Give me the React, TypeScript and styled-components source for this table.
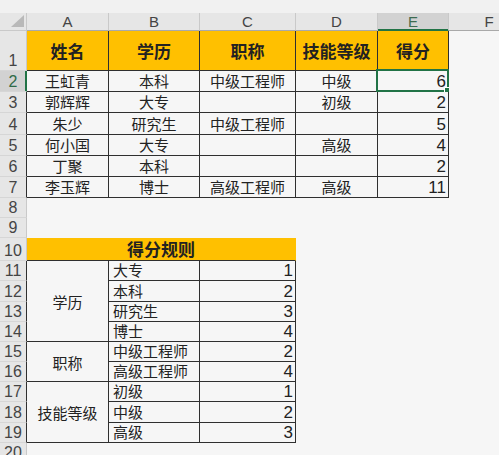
import React from 'react';
import styled, { createGlobalStyle } from 'styled-components';

const GREEN = '#217346';
const DARK = '#2f2f2f';
const YELLOW = '#ffc000';
const BG = '#f6f6f6';
const HEAD_BG = '#e6e6e6';
const HEAD_SEL = '#d2d2d2';
const HEAD_LINE = '#c9c9c9';

const Global = createGlobalStyle`
  html, body { margin: 0; padding: 0; background: ${BG}; overflow: hidden; }
  #root { width: 499px; height: 455px; overflow: hidden; }
`;

const Page = styled.div`
  width: 499px;
  height: 455px;
  background: ${BG};
  display: flex;
  flex-direction: column;
  overflow: hidden;
`;

const TopStrip = styled.div`
  flex: none;
  height: 13px;
  background: #f1f1f1;
`;

const Sheet = styled.table`
  border-collapse: separate;
  border-spacing: 0;
  table-layout: fixed;
  width: 530px;
  font-family: "Liberation Sans", "Noto Sans CJK SC", sans-serif;
  color: #222;
`;

const Row = styled.tr<{ $h: number }>`
  height: ${(p) => p.$h}px;
`;

const Corner = styled.th`
  background: ${HEAD_BG};
  border-right: 1px solid ${HEAD_LINE};
  border-bottom: 1px solid ${HEAD_LINE};
  padding: 0;
  vertical-align: bottom;
`;

const CornerInner = styled.div`
  display: flex;
  justify-content: flex-end;
  align-items: flex-end;
  padding: 0 2px 3px 0;
`;

const ColHead = styled.th<{ $sel?: boolean }>`
  background: ${(p) => (p.$sel ? HEAD_SEL : HEAD_BG)};
  color: ${(p) => (p.$sel ? '#3d6b50' : '#444')};
  font-weight: normal;
  font-size: 15px;
  line-height: 17px;
  text-align: center;
  vertical-align: bottom;
  padding: 0;
  border-right: 1px solid ${HEAD_LINE};
  border-bottom: 1px solid ${(p) => (p.$sel ? GREEN : '#a9a9a9')};
  box-shadow: ${(p) => (p.$sel ? `inset 0 -1px 0 ${GREEN}` : 'none')};
`;

const RowHead = styled.th<{ $sel?: boolean; $dark?: boolean }>`
  background: ${(p) => (p.$sel ? HEAD_SEL : HEAD_BG)};
  color: ${(p) => (p.$sel ? '#2f6a48' : '#444')};
  font-weight: normal;
  font-size: 16px;
  line-height: 19px;
  text-align: center;
  vertical-align: bottom;
  padding: 0;
  border-bottom: 1px solid #d6d6d6;
  border-right: 1px solid ${(p) => (p.$sel ? GREEN : p.$dark ? DARK : HEAD_LINE)};
  box-shadow: ${(p) => (p.$sel ? `inset -1px 0 0 ${GREEN}` : 'none')};
`;

type Align = 'left' | 'center' | 'right';

const Cell = styled.td<{
  $align: Align;
  $bold?: boolean;
  $fill?: string;
  $r?: boolean;
  $b?: boolean;
  $num?: boolean;
  $mid?: boolean;
}>`
  position: relative;
  padding: ${(p) => (p.$mid ? '3px 4px 0' : p.$num ? '0 2px 0 4px' : '0 4px')};
  background: ${(p) => p.$fill || BG};
  text-align: ${(p) => p.$align};
  vertical-align: ${(p) => (p.$mid ? 'middle' : 'bottom')};
  font-size: ${(p) => (p.$bold ? 17 : p.$num ? 17 : 15)}px;
  font-weight: ${(p) => (p.$bold ? 700 : 400)};
  line-height: 19px;
  white-space: nowrap;
  overflow: visible;
  border-right: 1px solid ${(p) => (p.$r ? DARK : 'transparent')};
  border-bottom: 1px solid ${(p) => (p.$b ? DARK : 'transparent')};
`;

const Selection = styled.div`
  position: absolute;
  top: -2px;
  left: -2px;
  right: -1px;
  bottom: -1px;
  border: 2px solid ${GREEN};
  pointer-events: none;
`;

const Handle = styled.div`
  position: absolute;
  right: -4px;
  bottom: -4px;
  width: 5px;
  height: 5px;
  background: ${GREEN};
  border: 1px solid #fff;
`;

type CellDef = {
  t?: string;
  a?: Align;
  bold?: boolean;
  fill?: string;
  r?: boolean;
  b?: boolean;
  rs?: number;
  cs?: number;
  num?: boolean;
  mid?: boolean;
  sel?: boolean;
};

type RowDef = { n: number; h: number; dark?: boolean; sel?: boolean; cells: CellDef[] };

const head = (t: string): CellDef => ({ t, a: 'center', bold: true, fill: YELLOW, r: true, b: true, mid: true });
const c = (t: string): CellDef => ({ t, a: 'center', r: true, b: true });
const n = (t: string, sel?: boolean): CellDef => ({ t, a: 'right', r: true, b: true, num: true, sel });
const l = (t: string): CellDef => ({ t, a: 'left', r: true, b: true });
const empty: CellDef = {};

const people: [string, string, string, string, string][] = [
  ['王虹青', '本科', '中级工程师', '中级', '6'],
  ['郭辉辉', '大专', '', '初级', '2'],
  ['朱少', '研究生', '中级工程师', '', '5'],
  ['何小国', '大专', '', '高级', '4'],
  ['丁聚', '本科', '', '', '2'],
  ['李玉辉', '博士', '高级工程师', '高级', '11'],
];
const peopleHeights = [21, 21, 22, 21, 21, 21];

const rows: RowDef[] = [
  {
    n: 1,
    h: 40,
    cells: [head('姓名'), head('学历'), head('职称'), head('技能等级'), head('得分'), empty],
  },
  ...people.map((p, i) => ({
    n: i + 2,
    h: peopleHeights[i],
    dark: true,
    sel: i === 0,
    cells: [c(p[0]), c(p[1]), c(p[2]), c(p[3]), n(p[4], i === 0), empty],
  })),
  { n: 8, h: 20, cells: [empty, empty, empty, empty, empty, empty] },
  { n: 9, h: 20, cells: [empty, empty, empty, empty, empty, empty] },
  {
    n: 10,
    h: 23,
    cells: [{ t: '得分规则', a: 'center', bold: true, fill: YELLOW, b: true, cs: 3, mid: true }, empty, empty, empty],
  },
  { n: 11, h: 20, dark: true, cells: [{ t: '学历', a: 'center', r: true, b: true, rs: 4, mid: true }, l('大专'), n('1'), empty, empty, empty] },
  { n: 12, h: 21, dark: true, cells: [l('本科'), n('2'), empty, empty, empty] },
  { n: 13, h: 20, dark: true, cells: [l('研究生'), n('3'), empty, empty, empty] },
  { n: 14, h: 20, dark: true, cells: [l('博士'), n('4'), empty, empty, empty] },
  { n: 15, h: 20, dark: true, cells: [{ t: '职称', a: 'center', r: true, b: true, rs: 2, mid: true }, l('中级工程师'), n('2'), empty, empty, empty] },
  { n: 16, h: 20, dark: true, cells: [l('高级工程师'), n('4'), empty, empty, empty] },
  { n: 17, h: 20, dark: true, cells: [{ t: '技能等级', a: 'center', r: true, b: true, rs: 3, mid: true }, l('初级'), n('1'), empty, empty, empty] },
  { n: 18, h: 21, dark: true, cells: [l('中级'), n('2'), empty, empty, empty] },
  { n: 19, h: 20, dark: true, cells: [l('高级'), n('3'), empty, empty, empty] },
  { n: 20, h: 20, cells: [empty, empty, empty, empty, empty, empty] },
];

const columns = ['A', 'B', 'C', 'D', 'E', 'F'];
const widths = [27, 82, 91, 96, 82, 71, 81];

export default function App() {
  return (
    <Page>
      <Global />
      <TopStrip />
      <Sheet>
        <colgroup>
          {widths.map((w, i) => (
            <col key={i} style={{ width: w }} />
          ))}
        </colgroup>
        <tbody>
          <Row $h={18}>
            <Corner>
              <CornerInner>
                <svg width="13" height="12" viewBox="0 0 13 12">
                  <polygon points="13,0 13,12 0,12" fill="#b9b9b9" />
                </svg>
              </CornerInner>
            </Corner>
            {columns.map((col) => (
              <ColHead key={col} $sel={col === 'E'}>
                {col}
              </ColHead>
            ))}
          </Row>
          {rows.map((row) => (
            <Row key={row.n} $h={row.h}>
              <RowHead $sel={row.sel} $dark={row.dark}>
                {row.n}
              </RowHead>
              {row.cells.map((cell, i) => (
                <Cell
                  key={i}
                  $align={cell.a || 'left'}
                  $bold={cell.bold}
                  $fill={cell.fill}
                  $r={cell.r}
                  $b={cell.b}
                  $num={cell.num}
                  $mid={cell.mid}
                  rowSpan={cell.rs}
                  colSpan={cell.cs}
                >
                  {cell.t}
                  {cell.sel && (
                    <Selection>
                      <Handle />
                    </Selection>
                  )}
                </Cell>
              ))}
            </Row>
          ))}
        </tbody>
      </Sheet>
    </Page>
  );
}
